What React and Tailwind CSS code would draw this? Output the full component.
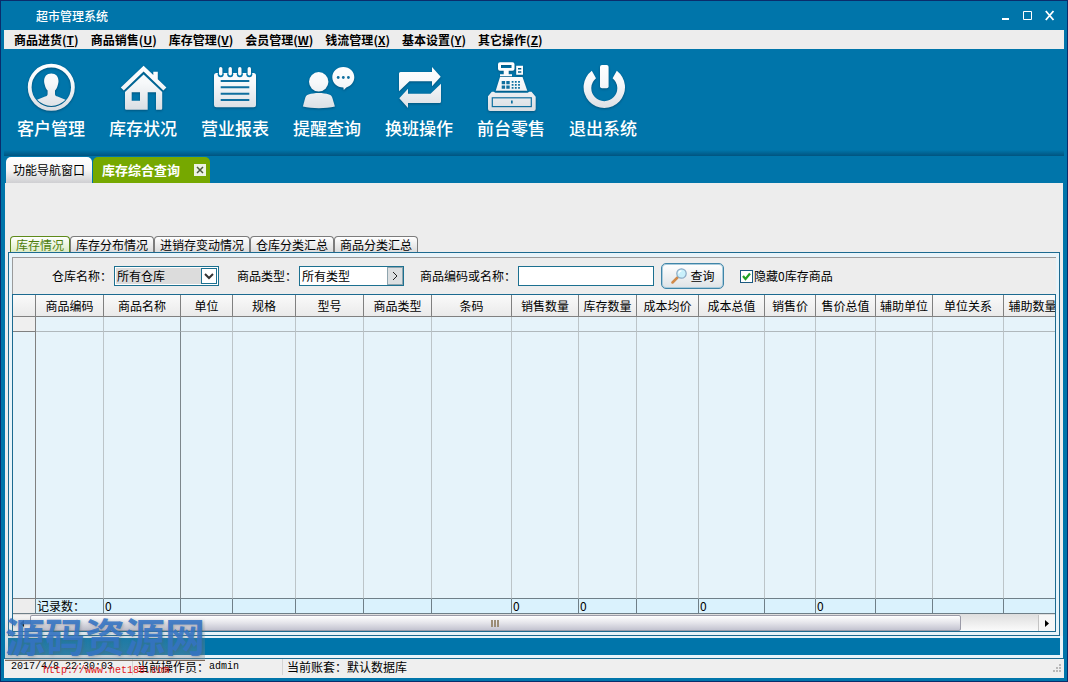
// Supermarket management desktop: title bar, menus, toolbar and the stock query page.

const MENUS = [
  { label: '商品进货', key: 'T' },
  { label: '商品销售', key: 'U' },
  { label: '库存管理', key: 'V' },
  { label: '会员管理', key: 'W' },
  { label: '钱流管理', key: 'X' },
  { label: '基本设置', key: 'Y' },
  { label: '其它操作', key: 'Z' },
];

const TOOLS = [
  { label: '客户管理', Icon: CustomerIcon },
  { label: '库存状况', Icon: HouseIcon },
  { label: '营业报表', Icon: ReportIcon },
  { label: '提醒查询', Icon: RemindIcon },
  { label: '换班操作', Icon: SwapIcon },
  { label: '前台零售', Icon: RegisterIcon },
  { label: '退出系统', Icon: PowerIcon },
];

const SUB_TABS = ['库存情况', '库存分布情况', '进销存变动情况', '仓库分类汇总', '商品分类汇总'];

// total is what the footer row shows under the column
const COLUMNS = [
  { label: '商品编码', width: 68, total: '记录数：' },
  { label: '商品名称', width: 77, total: '0', frozenEdge: true },
  { label: '单位', width: 52 },
  { label: '规格', width: 63 },
  { label: '型号', width: 68 },
  { label: '商品类型', width: 68 },
  { label: '条码', width: 80 },
  { label: '销售数量', width: 67, total: '0' },
  { label: '库存数量', width: 58, total: '0' },
  { label: '成本均价', width: 62 },
  { label: '成本总值', width: 66, total: '0' },
  { label: '销售价', width: 51 },
  { label: '售价总值', width: 60, total: '0' },
  { label: '辅助单位', width: 57 },
  { label: '单位关系', width: 71 },
  { label: '辅助数量', width: 58 },
];

function ToolSvg({ children }) {
  return (
    <svg width="56" height="52" viewBox="0 0 56 52" fill="url(#toolFill)" className="drop-shadow-[0_1px_1px_rgba(0,50,80,0.5)]">
      <defs>
        <linearGradient id="toolFill" gradientUnits="userSpaceOnUse" x1="0" y1="4" x2="0" y2="50">
          <stop offset="0" stopColor="#ffffff" />
          <stop offset="0.4" stopColor="#f6f8fa" />
          <stop offset="1" stopColor="#d9dde2" />
        </linearGradient>
      </defs>
      {children}
    </svg>
  );
}

function CustomerIcon() {
  return (
    <ToolSvg>
      <circle cx="28.3" cy="26.3" r="21.6" fill="none" stroke="url(#toolFill)" strokeWidth="3.8" />
      <path d="M28.3 12.5c4.6 0 7.2 3.1 7.2 7.6 0 1.4-.2 2.3-.7 3.8-.6 2.6-1.5 4.2-2.8 5.6v3.4c0 1.4 1 2.1 2.6 2.7l7.9 3.2a19.6 19.6 0 0 1-28.4 0l7.9-3.2c1.6-.6 2.6-1.3 2.6-2.7v-3.4c-1.3-1.4-2.2-3-2.8-5.6-.5-1.5-.7-2.4-.7-3.8 0-4.5 2.6-7.6 7.2-7.6z" />
    </ToolSvg>
  );
}

function HouseIcon() {
  return (
    <ToolSvg>
      <path d="M28.6 4.7 38.3 14v-3.3h4.5v7.6l8.6 8.3-3 3-19.8-19-19.8 19-3-3z" />
      <path
        fillRule="evenodd"
        d="M28.6 13.5 47.2 31v16.5q0 1.2-1.2 1.2h-5V31.3h-8.3v17.4H11.2q-1.2 0-1.2-1.2V31zM16.7 31.3v8.4H25v-8.4z"
      />
    </ToolSvg>
  );
}

function ReportIcon() {
  return (
    <ToolSvg>
      <path d="M9.5 12h37q2.5 0 2.5 2.5v29.3q0 2.5-2.5 2.5h-37Q7 46.3 7 43.8V14.5Q7 12 9.5 12z" />
      <path d="M13.7 20h28.6M13.7 26.3h28.6M13.7 32.7h28.6M13.7 39h28.6" stroke="#0f6f9f" strokeWidth="2" />
      {[13.7, 23.2, 32.8, 42.3].map((x) => (
        <g key={x}>
          <circle cx={x} cy="13.2" r="3" fill="#0075aa" />
          <rect x={x - 1.7} y="6" width="3.4" height="8.4" rx="1.7" />
        </g>
      ))}
    </ToolSvg>
  );
}

function RemindIcon() {
  return (
    <ToolSvg>
      <circle cx="19.7" cy="20.8" r="9.7" />
      <path d="M9.5 33.6c6-2 14.5-2 20.5 0 2 .7 2.8 1.6 3.4 3.4l2.5 8.6c-9.500 2.200-22.500 2.200-32 0L6.200 37c.6-1.800 1.300-2.700 3.300-3.400z" />
      <path d="M44.3 6c6.300 0 11 4.500 11 10.300 0 5-3.600 8.900-8 10.100L44.800 29l-.4-2.500c-6.400 0-11.100-4.500-11.100-10.200S38 6 44.300 6z" />
      <g fill="#0f6f9f">
        <circle cx="39.2" cy="16.5" r="1.4" />
        <circle cx="44.3" cy="16.5" r="1.4" />
        <circle cx="49.4" cy="16.5" r="1.4" />
      </g>
    </ToolSvg>
  );
}

function SwapIcon() {
  return (
    <ToolSvg>
      <path d="M9.5 11H41V6l8.7 9.7L41 25.3v-5H18.5L8 30.3V12.5Q8 11 9.5 11z" />
      <path d="M48.5 42H17v5L8.3 37.3 17 27.7v5h22.5L50 22.7v17.8q0 1.500-1.500 1.500z" />
    </ToolSvg>
  );
}

function RegisterIcon() {
  return (
    <ToolSvg>
      <path
        fillRule="evenodd"
        d="M17 1.3h12.5q2 0 2 2v4.4q0 2-2 2h-3.8v3.5H29v2.1H17v-2.1h3.7V9.7H17q-2 0-2-2V3.3q0-2 2-2zM18 4v3h10.5V4z"
      />
      <path fillRule="evenodd" d="M33.2 4.7H40v9h-6.8zM35 7v1.6h3.3V7zm0 3.2v1.6h3.3v-1.6z" />
      <path d="M17 16h22.5l4.8 13.7H12.7z" />
      <path d="M8.8 30.7h2l1.5 1h32.4l1.5-1h2.3l4.2 5V48q0 2-2 2H7q-2 0-2-2V35.2z" />
      <rect x="9.3" y="36.8" width="39" height="8.8" fill="none" stroke="#0f6f9f" strokeWidth="1.2" />
      <rect x="28" y="39.5" width="1.7" height="3" fill="#0f6f9f" />
      <path
        d="M18.7 20h3.4v3.2h-3.4zM23.3 20h3.4v3.2h-3.4zM18.7 24.6h3.4v3.2h-3.4zM23.3 24.6h3.4v3.2h-3.4z"
        fill="#0f6f9f"
      />
      <path d="M28.7 20.8h9M28.7 23.8h9M28.7 26.8h9" stroke="#0f6f9f" strokeWidth="1.8" strokeDasharray="1.8 1.4" />
    </ToolSvg>
  );
}

function PowerIcon() {
  return (
    <ToolSvg>
      <path d="M16.8 9.7 21 17.2a13 13 0 1 0 16.6 0l4.2-7.5a20.7 20.7 0 1 1-25 0z" />
      <rect x="25" y="4" width="8.6" height="23.3" rx="2" />
    </ToolSvg>
  );
}

function TitleBar() {
  return (
    <header className="flex h-[29px] items-center justify-between pl-8 pr-[9px] text-white">
      <h1 className="text-xs font-medium">超市管理系统</h1>
      <div className="flex gap-3">
        <button aria-label="最小化" className="h-3 w-[10px]">
          <svg width="10" height="12" viewBox="0 0 10 12"><path d="M1 8h7v2H1z" fill="#fff" /></svg>
        </button>
        <button aria-label="最大化" className="h-3 w-[10px]">
          <svg width="10" height="12" viewBox="0 0 10 12"><path d="M.5 1.5h8v8h-8z" fill="none" stroke="#fff" /></svg>
        </button>
        <button aria-label="关闭" className="h-3 w-[10px]">
          <svg width="10" height="12" viewBox="0 0 10 12">
            <path d="M.8 1l7.7 9M8.5 1L.8 10" stroke="#fff" strokeWidth="1.8" />
          </svg>
        </button>
      </div>
    </header>
  );
}

function FilterBar() {
  return (
    <form className="flex h-[37px] items-center border-l border-t border-[#9a9a9a] bg-[#ededed] pl-[39px]">
      <label htmlFor="warehouse">仓库名称：</label>
      <div className="relative ml-0.5 mr-[18px]">
        <select
          id="warehouse"
          className="block h-5 w-[105px] appearance-none border border-[#1c7090] bg-[#dcdcdc] px-[2px] text-xs leading-4 shadow-[inset_0_0_0_1px_#fff]"
        >
          <option>所有仓库</option>
        </select>
        <span className="pointer-events-none absolute right-0.5 top-0.5 flex h-4 w-4 items-center justify-center border border-[#1c7090] bg-white">
          <svg width="10" height="7" viewBox="0 0 10 7"><path d="M1 1l4 4 4-4" fill="none" stroke="#333" strokeWidth="2" /></svg>
        </span>
      </div>

      <label htmlFor="category">商品类型：</label>
      <div className="ml-0.5 mr-4 flex h-5 w-[105px] border border-[#1c7090] bg-white">
        <input id="category" defaultValue="所有类型" className="min-w-0 flex-1 px-0.5 text-xs outline-none" />
        <button type="button" aria-label="选择类型" className="flex w-4 items-center justify-center border border-[#8fa5ae] bg-[#dcdfe1]">
          <svg width="6" height="10" viewBox="0 0 6 10"><path d="M1 1l4 4-4 4" fill="none" stroke="#222" /></svg>
        </button>
      </div>

      <label htmlFor="keyword">商品编码或名称：</label>
      <input id="keyword" className="ml-0.5 mr-[7px] h-5 w-[136px] border border-[#1c7090] bg-white px-1 text-xs outline-none" />

      <button
        type="button"
        className="mr-4 flex h-[26px] w-[63px] items-center justify-center gap-1 rounded-[5px] border border-[#3f85a8] bg-linear-to-b from-white to-[#dfe3e6] shadow-[inset_0_0_0_1px_#a9cbdc]"
      >
        <svg width="16" height="16" viewBox="0 0 16 16">
          <path d="M1.5 14.5l5-5" stroke="#d08a4a" strokeWidth="2.5" strokeLinecap="round" />
          <circle cx="10.5" cy="5.5" r="4.7" fill="#c9f0fb" stroke="#8aa9c4" strokeWidth="1.2" />
          <path d="M7.8 5.5a2.8 2.8 0 0 1 2.700-2.700" fill="none" stroke="#fff" strokeWidth="1.2" />
        </svg>
        查询
      </button>

      <label className="flex items-center gap-px">
        <span className="relative h-[13px] w-[13px]">
          <input
            type="checkbox"
            defaultChecked
            className="peer block h-[13px] w-[13px] appearance-none border border-[#1c5a80] bg-white"
          />
          <svg
            width="13" height="13" viewBox="0 0 13 13"
            className="pointer-events-none absolute left-0 top-0 hidden peer-checked:block"
          >
            <path d="M3 6l2.5 3L10 3.5" fill="none" stroke="#21a121" strokeWidth="2.2" />
          </svg>
        </span>
        隐藏0库存商品
      </label>
    </form>
  );
}

function StockGrid() {
  const edge = (col) => (col.frozenEdge ? 'border-r-[#7d868b]' : 'border-r-[#bcc4c8]');

  return (
    <div className="min-h-0 flex-1 overflow-hidden">
      <table className="h-full w-full min-w-[1049px] table-fixed border-separate border-spacing-0">
        <colgroup>
          <col style={{ width: 23 }} />
          {COLUMNS.map((col) => <col key={col.label} style={{ width: col.width }} />)}
        </colgroup>
        <thead>
          <tr className="h-[22px] bg-linear-to-b from-[#fafafa] to-[#e9e9e9]">
            <td className="border-b border-r border-[#808080] p-0" />
            {COLUMNS.map((col) => (
              <th key={col.label} scope="col" className="whitespace-nowrap border-b border-r border-[#808080] p-0 font-normal leading-4">
                {col.label}
              </th>
            ))}
          </tr>
        </thead>
        <tbody>
          <tr className="h-[15px]">
            <td className="border-b border-r border-[#808080] bg-[#efefef] p-0" />
            {COLUMNS.map((col) => (
              <td key={col.label} className={`border-b border-r border-b-[#b0b8bc] p-0 ${edge(col)}`} />
            ))}
          </tr>
          <tr>
            <td className="border-b border-r border-[#808080] p-0" />
            {COLUMNS.map((col) => (
              <td key={col.label} className={`border-b border-r border-b-[#6f7f88] p-0 ${edge(col)}`} />
            ))}
          </tr>
        </tbody>
        <tfoot>
          <tr className="h-[15px] bg-[#daf2fd]">
            <td className="border-b border-r border-[#6f7f88] bg-[#ededed] p-0" />
            {COLUMNS.map((col) => (
              <td key={col.label} className="whitespace-nowrap border-b border-r border-[#6f7f88] p-0 pl-px leading-[14px]">
                {col.total}
              </td>
            ))}
          </tr>
        </tfoot>
      </table>
    </div>
  );
}

function ScrollBar() {
  return (
    <div className="flex h-[17px] shrink-0 bg-linear-to-b from-[#dedede] to-[#fbfbfb] pt-px">
      <button aria-label="向左滚动" className="flex w-[17px] shrink-0 items-center justify-center bg-[#f2f2f2]">
        <svg width="4" height="7" viewBox="0 0 4 7"><path d="M4 0v7L0 3.5z" /></svg>
      </button>
      <div className="flex flex-12 items-center justify-center gap-px rounded-[2px] border border-[#9b9ba8] bg-linear-to-b from-white via-[#e4e4ea] to-[#c3c3d0]">
        <span className="h-[7px] w-0.5 bg-[#9c8d76]" />
        <span className="h-[7px] w-0.5 bg-[#9c8d76]" />
        <span className="h-[7px] w-0.5 bg-[#9c8d76]" />
      </div>
      <div className="flex-1" />
      <button aria-label="向右滚动" className="flex w-[17px] shrink-0 items-center justify-center border-l border-[#c4c4c4] bg-[#f7f7f7]">
        <svg width="4" height="7" viewBox="0 0 4 7"><path d="M0 0v7l4-3.5z" /></svg>
      </button>
    </div>
  );
}

function StatusBar() {
  return (
    <footer className="flex h-[19px] items-center bg-[#efefef] pb-[3px] pl-[7px] leading-4">
      <span className="w-[121px] font-['Liberation_Mono',monospace] text-[10px]">2017/4/8 22:30:03</span>
      <span className="flex w-[150px] items-center border-l border-[#d4d4d4] pl-1">
        当前操作员：
        <span className="font-['Liberation_Mono',monospace] text-[10px]">admin</span>
      </span>
      <span className="flex-1 border-l border-[#d4d4d4] pl-1">当前账套：默认数据库</span>
      <svg width="12" height="12" viewBox="0 0 12 12" fill="#b9b9b9" className="self-end">
        <path d="M7 1h2v2H7zM4 4h2v2H4zM7 4h2v2H7zM1 7h2v2H1zM4 7h2v2H4zM7 7h2v2H7z" />
      </svg>
    </footer>
  );
}

export default function App() {
  return (
    <div className="relative flex h-screen flex-col overflow-hidden border border-[#0a2c6c] bg-[#0075aa] px-[3px] pb-[3px] font-['Noto_Sans_CJK_SC',sans-serif] text-xs text-black">
      <TitleBar />

      <nav className="flex h-[19px] items-center gap-3 bg-[#ededed] pl-[10px] font-bold">
        {MENUS.map((menu) => (
          <button key={menu.key} className="whitespace-nowrap leading-4">
            {menu.label}(<span className="underline">{menu.key}</span>)
          </button>
        ))}
      </nav>

      <div className="flex h-[101px] items-start gap-6 pl-[13px] pt-3">
        {TOOLS.map(({ label, Icon }) => (
          <button key={label} className="flex w-[68px] flex-col items-center text-white">
            <Icon />
            <span className="mt-[3px] whitespace-nowrap text-[17px] font-medium leading-6">{label}</span>
          </button>
        ))}
      </div>
      <div className="h-[6px] shrink-0 bg-linear-to-b from-[#0075aa] to-[#005480]" />

      {/* Open pages */}
      <div className="flex h-[27px] items-end gap-px pl-0.5">
        <button className="h-[26px] rounded-t-[5px] bg-linear-to-b from-white via-[#f6f6f6] to-[#cfcfd2] px-[7px]">功能导航窗口</button>
        <div className="flex h-[26px] items-center gap-[14px] rounded-t-[5px] bg-[#76a800] pl-[9px] pr-1">
          <button className="text-[13px] font-bold text-white">库存综合查询</button>
          <button aria-label="关闭页面" className="flex h-3 w-3 items-center justify-center bg-[#eef2e4]">
            <svg width="8" height="8" viewBox="0 0 8 8"><path d="M1 1l6 6M7 1L1 7" stroke="#4c5a3a" strokeWidth="1.5" /></svg>
          </button>
        </div>
      </div>

      <main className="mx-px flex min-h-0 flex-1 flex-col bg-[#ededed]">
        <div className="mt-[53px] flex pl-[5px]">
          {SUB_TABS.map((tab, i) => (
            <button
              key={tab}
              className={`h-4 whitespace-nowrap rounded-t-[4px] border border-b-0 px-[5px] leading-4 ${
                i === 0
                  ? 'border-[#5e8a1a] bg-linear-to-b from-white to-[#dcebc4] text-[#4e7d0c]'
                  : 'border-[#7c7c7c] bg-linear-to-b from-white to-[#dcdcdc]'
              }`}
            >
              {tab}
            </button>
          ))}
        </div>

        <section className="mx-[3px] flex min-h-0 flex-1 flex-col border border-[#1c6a90] bg-[#e8f4fa] px-[3px] pb-[3px] pt-1">
          <FilterBar />
          <div className="flex min-h-0 flex-1 flex-col border border-[#1c6a90] bg-[#e6f3fa]">
            <StockGrid />
            <ScrollBar />
          </div>
        </section>

        <div className="shrink-0 bg-[#e8f4fa] px-[3px] pb-[3px] pt-0.5">
          <div className="h-[17px] bg-[#0075aa]" />
        </div>
      </main>
      <div className="h-px shrink-0 bg-[#1c6a90]" />
      <StatusBar />

      {/* Site mark over the lower left corner */}
      <div className="pointer-events-none absolute bottom-0 left-1">
        <p className="h-[44px] w-[200px] whitespace-nowrap border-b border-[#7b6a5c] bg-linear-to-b from-transparent to-[#8a8f96]/40 text-[40px] font-bold leading-[36px] text-[#3474c4]/90 [text-shadow:1px_1px_3px_rgba(90,95,100,0.35)]">
          源码资源网
        </p>
        <p className="h-[20px] pl-[38px] pt-px font-['Liberation_Mono',monospace] text-[10px] leading-[18px] text-[#e02020]">http://www.net188.com</p>
      </div>
    </div>
  );
}
